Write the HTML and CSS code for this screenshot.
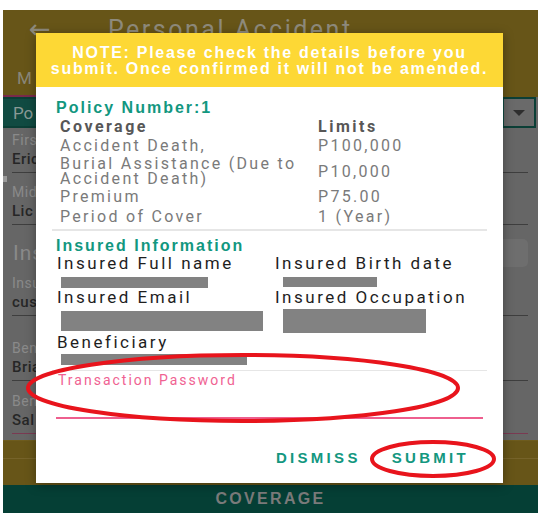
FILE: index.html
```html
<!DOCTYPE html>
<html>
<head>
<meta charset="utf-8">
<link rel="stylesheet" href="styles.css">
</head>
<body>
<div class="phone">
  <div class="appbar">
    <div class="appbar-top">
      <span class="back">&#8592;</span>
      <span class="title">Personal Accident</span>
    </div>
    <div class="tabs"><span class="tab">M</span></div>
    <div class="tab-indicator"></div>
  </div>
  <div class="content">
    <div class="spinner">
      <span class="spinner-text">Po</span>
      <span class="spinner-arrow"><svg width="12" height="6" viewBox="0 0 12 6"><path d="M0 0h12L6 6z" fill="#2e2e2e"/></svg></span>
    </div>
    <div class="field f1"><div class="label">First Name</div><div class="value">Eric</div></div>
    <div class="field f2"><div class="label">Middle Name</div><div class="value">Lic</div></div>
    <div class="section"><span>Insured</span><span class="section-btn"></span></div>
    <div class="field f3"><div class="label">Insured</div><div class="value">customer</div></div>
    <div class="field f4"><div class="label">Beneficiary</div><div class="value">Brian</div></div>
    <div class="field f5 focus"><div class="label">Beneficiary</div><div class="value">Sal</div></div>
  </div>
  <div class="bottom-bar"></div>
  <div class="coverage-bar">COVERAGE</div>
  <div class="side-square"></div>

  <div class="modal">
    <div class="modal-head">NOTE: Please check the details before you submit. Once confirmed it will not be amended.</div>
    <div class="modal-body">
      <div class="policy">Policy Number:1</div>
      <div class="cov-table">
        <div class="th">Coverage</div><div class="th">Limits</div>
        <div class="td">Accident Death,</div><div class="td">P100,000</div>
        <div class="td two">Burial Assistance (Due to Accident Death)</div><div class="td mid">P10,000</div>
        <div class="td">Premium</div><div class="td">P75.00</div>
        <div class="td">Period of Cover</div><div class="td">1 (Year)</div>
      </div>
      <div class="divider"></div>
      <div class="policy ins-title">Insured Information</div>
      <div class="ins-grid">
        <div class="ins-label">Insured Full name</div><div class="ins-label">Insured Birth date</div>
        <div class="ins-val r1"><span class="redact" style="width:147px;height:11px"></span></div>
        <div class="ins-val r1"><span class="redact r-right" style="width:94px;height:10px"></span></div>
        <div class="ins-label">Insured Email</div><div class="ins-label">Insured Occupation</div>
        <div class="ins-val r2"><span class="redact" style="width:202px;height:20px"></span></div>
        <div class="ins-val r2"><span class="redact r-right" style="width:143px;height:24px"></span></div>
        <div class="ins-label">Beneficiary</div><div></div>
        <div class="ins-val r3"><span class="redact" style="width:186px;height:11px"></span></div><div></div>
      </div>
      <div class="divider d2"></div>
      <div class="pw-label">Transaction Password</div>
      <div class="pw-line"></div>
      <div class="actions">
        <span class="btn">DISMISS</span>
        <span class="btn">SUBMIT</span>
      </div>
    </div>
  </div>
</div>
<svg class="marks" width="545" height="521" viewBox="0 0 545 521">
  <ellipse cx="243" cy="388" rx="215" ry="33" fill="none" stroke="#e8141c" stroke-width="4"/>
  <ellipse cx="433" cy="459" rx="61" ry="17" fill="none" stroke="#e8141c" stroke-width="4"/>
</svg>
</body>
</html>
```
FILE: styles.css
```css
* { box-sizing: border-box; }
html, body { margin: 0; padding: 0; background: #fff; }
body { width: 545px; height: 521px; position: relative; overflow: hidden; font-family: Roboto, "Liberation Sans", sans-serif; }

.phone { position: relative; margin: 10px 0 0 3px; width: 535px; height: 503px; overflow: hidden; background: #666; }

.appbar { height: 87px; background: #675518; position: relative; }
.appbar-top { display: flex; align-items: center; height: 38px; padding-left: 26px; }
.back { color: #8e8a7c; font-size: 26px; line-height: 26px; width: 79px; font-family: "DejaVu Sans", sans-serif; }
.title { color: #8e8a7c; font-size: 25px; letter-spacing: 2.5px; }
.tabs { padding: 20px 0 0 14px; }
.tab { color: #8a8778; font-size: 17px; }
.tab-indicator { position: absolute; left: 0; bottom: 0; width: 34px; height: 2px; background: #7a2a4a; }

.content { height: 343px; background: #666; }
.spinner { display: flex; height: 31px; margin: 0 2px 0 0; background: #114b42; border: 2px solid #0b3f36; border-left: 0; }
.spinner-text { color: #8a9a96; font-size: 17px; padding: 4px 0 0 10px; flex: 1; }
.spinner-arrow { width: 30px; background: #6a6a6a; display: flex; align-items: center; justify-content: center; margin-left: auto; }

.field { margin-left: 9px; width: 516px; border-bottom: 1px solid #3e3e3e; padding-bottom: 2px; }
.label { color: #8a8a8a; font-size: 14px; line-height: 18px; letter-spacing: 0.5px; }
.value { color: #262626; font-size: 15px; line-height: 21px; font-weight: 500; letter-spacing: 0.5px; }
.f1 { margin-top: 3px; }
.f2 { margin-top: 10px; }
.f3 { margin-top: 9px; }
.f4 { margin-top: 23px; }
.f5 { margin-top: 11px; }
.focus { border-bottom-color: #7a3a52; }
.section { display: flex; align-items: center; justify-content: space-between; margin-top: 16px; height: 24px; padding-left: 10px; color: #8a8a8a; font-size: 21px; letter-spacing: 1px; }
.section-btn { width: 30px; height: 28px; border-radius: 5px; background: #6e6e6e; margin-right: 10px; }

.bottom-bar { height: 45px; background: #675518; border-top: 1px solid #6e5c1e; }
.bottom-bar::after { content: ""; display: block; margin-top: 17px; height: 1px; background: #76632a; }
.coverage-bar { height: 28px; background: #053f35; color: #7a7a7a; font-family: "Liberation Sans", sans-serif; font-weight: bold; font-size: 16px; letter-spacing: 2.3px; text-align: center; line-height: 28px; }
.side-square { position: absolute; left: -1px; top: 166px; width: 5px; height: 6px; background: #9a9a9a; }

.modal { position: absolute; left: 33px; top: 23px; width: 467px; height: 450px; background: #fff; box-shadow: 0 2px 10px rgba(0,0,0,0.35); }
.modal-head { height: 54px; background: #fdd835; color: #fff; font-family: "Liberation Sans", sans-serif; font-weight: bold; font-size: 16px; line-height: 16px; letter-spacing: 1.7px; text-align: center; padding: 12px 4px 0; }
.modal-body { padding: 12px 16px 0 16px; }
.policy { color: #12977f; font-family: "Liberation Sans", sans-serif; font-weight: bold; font-size: 16px; line-height: 18px; letter-spacing: 2px; padding-left: 4px; }
.cov-table { display: grid; grid-template-columns: 258px 1fr; padding-left: 8px; }
.th { color: #575757; font-weight: bold; font-size: 16px; line-height: 19px; letter-spacing: 2.5px; }
.td { color: #7a7a7a; font-size: 16px; line-height: 19px; letter-spacing: 2.3px; }
.td.two { line-height: 15px; padding: 1px 0; }
.td.mid { align-self: center; }
.td:nth-last-child(-n+2) { padding-top: 1px; }
.divider { margin-top: 3px; height: 2px; background: #e6e6e6; }
.ins-title { margin-top: 6px; }
.ins-grid { display: grid; grid-template-columns: 218px 1fr; padding-left: 5px; }
.ins-label { color: #1e1e1e; font-size: 17px; line-height: 16px; padding-bottom: 2px; letter-spacing: 2.5px; white-space: nowrap; }
.ins-val { display: flex; align-items: center; }
.r1 { height: 16px; padding-top: 2px; }
.r2 { height: 27px; }
.r3 { height: 15px; }
.redact { display: block; background: #828282; margin-left: 4px; }
.r-right { margin-left: 8px; }
.d2 { margin-top: 3px; height: 1px; }
.pw-label { color: #f06292; font-size: 14px; line-height: 18px; letter-spacing: 2px; padding-left: 6px; margin-top: 0; }
.pw-line { margin: 28px 4px 0 4px; height: 2px; background: #ee5f8e; }
.actions { display: flex; justify-content: flex-end; gap: 31px; padding-right: 18px; margin-top: 30px; }
.btn { color: #13977f; font-family: "Liberation Sans", sans-serif; font-weight: bold; font-size: 15px; letter-spacing: 3.3px; }

.marks { position: absolute; left: 0; top: 0; pointer-events: none; }
```
